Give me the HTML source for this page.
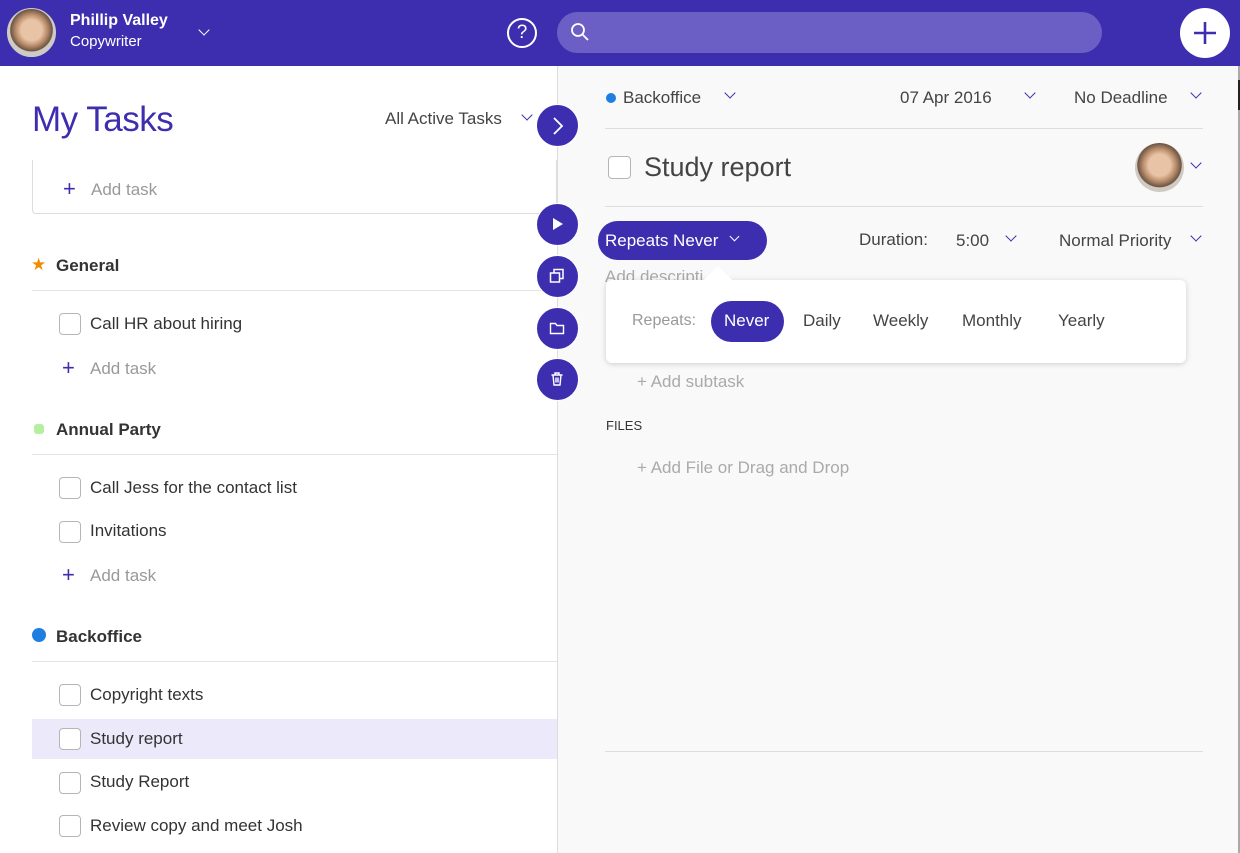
<!DOCTYPE html>
<html><head><meta charset="utf-8"><style>
*{box-sizing:border-box;margin:0;padding:0}
body{width:1240px;height:853px;overflow:hidden;font-family:"Liberation Sans",sans-serif;background:#fff;position:relative;color:#333}
.abs{position:absolute}
.hdr{left:0;top:0;width:1240px;height:66px;background:#3d2eb0}
.av{border-radius:50%;background:radial-gradient(circle at 50% 45%,#e8c3a5 0 30%,#b98d6c 45%,#6b5443 60%,#cfcac2 62%)}
.chev{width:8px;height:8px;border-right:1.6px solid #3d2eb0;border-bottom:1.6px solid #3d2eb0;transform:rotate(45deg)}
.t{position:absolute;white-space:nowrap}
.cb{position:absolute;width:22px;height:22px;border:1.5px solid #b5b5b5;border-radius:4px;background:#fff}
.line{position:absolute;height:1px;background:#e4e4e4}
.plus{color:#3d2eb0;font-size:22px}
.gray{color:#999}
.circ{position:absolute;width:43px;height:43px;border-radius:50%;background:#3d2eb0;border:1px solid #fff}
</style></head><body>
<div class="abs hdr"></div>
<div class="abs av" style="left:7px;top:8px;width:49px;height:49px;border:1px solid #ccc"></div>
<div class="t" style="left:70px;top:12px;color:#fff;font-weight:bold;font-size:16px">Phillip Valley</div>
<div class="t" style="left:70px;top:33px;color:#fff;font-size:15px">Copywriter</div>
<div class="abs chev" style="left:200px;top:26px;border-color:#fff"></div>
<div class="abs" style="left:507px;top:18px;width:30px;height:30px;border:2px solid #fff;border-radius:50%;color:#fff;text-align:center;font-size:19px;line-height:26px">?</div>
<div class="abs" style="left:557px;top:12px;width:545px;height:41px;border-radius:21px;background:#6b5fc6"></div>
<svg class="abs" style="left:570px;top:22px" width="20" height="20"><circle cx="8" cy="8" r="6" fill="none" stroke="#fff" stroke-width="1.8"/><path d="M12.5 12.5L18 18" stroke="#fff" stroke-width="1.8"/></svg>
<div class="abs" style="left:1180px;top:8px;width:50px;height:50px;border-radius:50%;background:#fff"></div>
<svg class="abs" style="left:1192px;top:20px" width="26" height="26"><path d="M13 2v22M2 13h22" stroke="#3d2eb0" stroke-width="2.6"/></svg>

<div class="abs" style="left:557px;top:66px;width:683px;height:787px;background:#f9f9f9;border-left:1px solid #ddd"></div>
<div class="abs" style="left:1238px;top:66px;width:2px;height:787px;background:#aaa"></div>
<div class="abs" style="left:1238px;top:80px;width:2px;height:30px;background:#222"></div>

<div class="t" style="left:32px;top:100px;font-size:35px;color:#3d2eb0;font-weight:normal;letter-spacing:-0.5px">My Tasks</div>
<div class="t" style="left:385px;top:109px;font-size:17px;color:#444">All Active Tasks</div>
<div class="abs chev" style="left:523px;top:111px"></div>
<div class="abs" style="left:32px;top:160px;width:525px;height:54px;border:1px solid #ddd;border-top:none;border-radius:0 0 4px 4px"></div>
<div class="t plus" style="left:63px;top:176px">+</div>
<div class="t gray" style="left:91px;top:180px;font-size:17px">Add task</div>

<div class="t" style="left:31px;top:255px;color:#f08c00;font-size:17px">★</div>
<div class="t" style="left:56px;top:256px;font-size:17px;font-weight:bold;color:#333">General</div>
<div class="line" style="left:32px;top:290px;width:525px"></div>
<div class="cb" style="left:59px;top:313px"></div>
<div class="t" style="left:90px;top:314px;font-size:17px">Call HR about hiring</div>
<div class="t plus" style="left:62px;top:355px">+</div>
<div class="t gray" style="left:90px;top:359px;font-size:17px">Add task</div>

<div class="abs" style="left:34px;top:424px;width:10px;height:10px;background:#b5f0a0;border-radius:3px"></div>
<div class="t" style="left:56px;top:420px;font-size:17px;font-weight:bold">Annual Party</div>
<div class="line" style="left:32px;top:454px;width:525px"></div>
<div class="cb" style="left:59px;top:477px"></div>
<div class="t" style="left:90px;top:478px;font-size:17px">Call Jess for the contact list</div>
<div class="cb" style="left:59px;top:521px"></div>
<div class="t" style="left:90px;top:521px;font-size:17px">Invitations</div>
<div class="t plus" style="left:62px;top:562px">+</div>
<div class="t gray" style="left:90px;top:566px;font-size:17px">Add task</div>

<div class="abs" style="left:32px;top:628px;width:14px;height:14px;background:#1e7fe0;border-radius:50%"></div>
<div class="t" style="left:56px;top:627px;font-size:17px;font-weight:bold">Backoffice</div>
<div class="line" style="left:32px;top:661px;width:525px"></div>
<div class="cb" style="left:59px;top:684px"></div>
<div class="t" style="left:90px;top:685px;font-size:17px">Copyright texts</div>
<div class="abs" style="left:32px;top:719px;width:525px;height:40px;background:#ebe9fa"></div>
<div class="cb" style="left:59px;top:728px"></div>
<div class="t" style="left:90px;top:729px;font-size:17px">Study report</div>
<div class="cb" style="left:59px;top:772px"></div>
<div class="t" style="left:90px;top:772px;font-size:17px">Study Report</div>
<div class="cb" style="left:59px;top:815px"></div>
<div class="t" style="left:90px;top:816px;font-size:17px">Review copy and meet Josh</div>

<div class="abs" style="left:557px;top:225px;width:1px;height:160px;background:#ddd"></div>
<div class="circ" style="left:536px;top:104px"></div>
<svg class="abs" style="left:550px;top:115px" width="16" height="22"><path d="M4 3l8 8-8 8" fill="none" stroke="#fff" stroke-width="1.8"/></svg>
<div class="circ" style="left:536px;top:203px"></div>
<svg class="abs" style="left:549px;top:216px" width="16" height="16"><path d="M4 2l10 6-10 6z" fill="#fff"/></svg>
<div class="circ" style="left:536px;top:255px"></div>
<svg class="abs" style="left:549px;top:268px" width="16" height="16"><rect x="5" y="1.5" width="9" height="9" fill="none" stroke="#fff" stroke-width="1.5"/><rect x="1.5" y="5" width="9" height="9" fill="#3d2eb0" stroke="#fff" stroke-width="1.5"/></svg>
<div class="circ" style="left:536px;top:307px"></div>
<svg class="abs" style="left:549px;top:320px" width="16" height="16"><path d="M1.5 3.5h5l1.5 2h6.5v8h-13z" fill="none" stroke="#fff" stroke-width="1.4"/></svg>
<div class="circ" style="left:536px;top:358px"></div>
<svg class="abs" style="left:549px;top:371px" width="16" height="16"><path d="M2.5 4h11M6 4V2h4v2M4 4l1 10h6l1-10M7 6.5v5M9 6.5v5" fill="none" stroke="#fff" stroke-width="1.4"/></svg>

<div class="abs" style="left:606px;top:93px;width:10px;height:10px;border-radius:50%;background:#1e7fe0"></div>
<div class="t" style="left:623px;top:88px;font-size:17px;color:#444">Backoffice</div>
<div class="abs chev" style="left:726px;top:89px"></div>
<div class="t" style="left:900px;top:88px;font-size:17px;color:#444">07 Apr 2016</div>
<div class="abs chev" style="left:1026px;top:89px"></div>
<div class="t" style="left:1074px;top:88px;font-size:17px;color:#444">No Deadline</div>
<div class="abs chev" style="left:1192px;top:89px"></div>
<div class="line" style="left:605px;top:128px;width:598px;background:#ddd"></div>
<div class="cb" style="left:608px;top:156px;width:23px;height:23px"></div>
<div class="t" style="left:644px;top:152px;font-size:27px;color:#444">Study report</div>
<div class="abs av" style="left:1135px;top:143px;width:49px;height:49px"></div>
<div class="abs chev" style="left:1192px;top:159px"></div>
<div class="line" style="left:605px;top:206px;width:598px;background:#ddd"></div>

<div class="abs" style="left:598px;top:221px;width:169px;height:39px;border-radius:20px;background:#3d2eb0"></div>
<div class="t" style="left:605px;top:231px;font-size:17px;color:#fff">Repeats Never</div>
<div class="abs chev" style="left:731px;top:233px;border-color:#fff;width:7px;height:7px"></div>
<div class="t" style="left:859px;top:230px;font-size:17px;color:#444">Duration:</div>
<div class="t" style="left:956px;top:231px;font-size:17px;color:#444">5:00</div>
<div class="abs chev" style="left:1007px;top:232px"></div>
<div class="t" style="left:1059px;top:231px;font-size:17px;color:#444">Normal Priority</div>
<div class="abs chev" style="left:1192px;top:232px"></div>
<div class="t gray" style="left:605px;top:267px;font-size:17px;color:#aaa">Add descripti</div>

<div class="abs" style="left:606px;top:280px;width:580px;height:83px;background:#fff;border-radius:6px;box-shadow:0 1px 6px rgba(0,0,0,.18)"></div>
<div class="abs" style="left:708px;top:270px;width:20px;height:20px;background:#fff;transform:rotate(45deg)"></div>
<div class="t" style="left:632px;top:312px;font-size:16px;color:#999">Repeats:</div>
<div class="abs" style="left:711px;top:301px;width:73px;height:41px;border-radius:21px;background:#3d2eb0"></div>
<div class="t" style="left:724px;top:311px;font-size:17px;color:#fff">Never</div>
<div class="t" style="left:803px;top:311px;font-size:17px;color:#444">Daily</div>
<div class="t" style="left:873px;top:311px;font-size:17px;color:#444">Weekly</div>
<div class="t" style="left:962px;top:311px;font-size:17px;color:#444">Monthly</div>
<div class="t" style="left:1058px;top:311px;font-size:17px;color:#444">Yearly</div>

<div class="t" style="left:637px;top:372px;font-size:17px;color:#aaa">+ Add subtask</div>
<div class="t" style="left:606px;top:418px;font-size:13px;color:#333">FILES</div>
<div class="t" style="left:637px;top:458px;font-size:17px;color:#aaa">+ Add File or Drag and Drop</div>
<div class="line" style="left:605px;top:751px;width:598px;background:#ddd"></div>
</body></html>
